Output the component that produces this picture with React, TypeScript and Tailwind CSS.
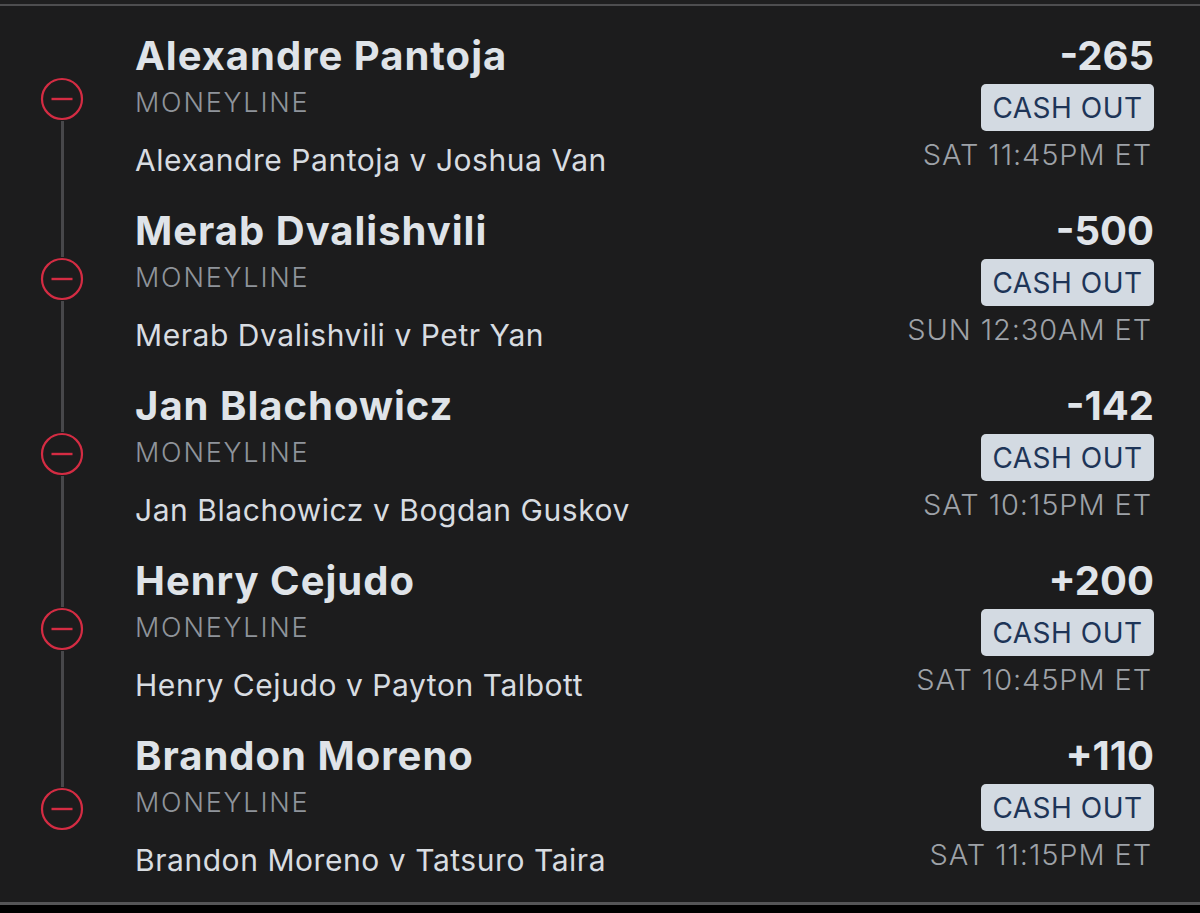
const bets = [
  { name: "Alexandre Pantoja", match: "Alexandre Pantoja v Joshua Van", odds: "-265", time: "SAT 11:45PM ET", top: "h-[41px]" },
  { name: "Merab Dvalishvili", match: "Merab Dvalishvili v Petr Yan", odds: "-500", time: "SUN 12:30AM ET", top: "h-[46px]" },
  { name: "Jan Blachowicz", match: "Jan Blachowicz v Bogdan Guskov", odds: "-142", time: "SAT 10:15PM ET", top: "h-[46px]" },
  { name: "Henry Cejudo", match: "Henry Cejudo v Payton Talbott", odds: "+200", time: "SAT 10:45PM ET", top: "h-[46px]" },
  { name: "Brandon Moreno", match: "Brandon Moreno v Tatsuro Taira", odds: "+110", time: "SAT 11:15PM ET", top: "h-[51px]" },
];

function MinusCircle() {
  return (
    <svg width="44" height="44" viewBox="0 0 44 44" className="block">
      <circle cx="22" cy="22" r="20" fill="none" stroke="#d42c43" strokeWidth="2.2" />
      <line x1="11.5" y1="22" x2="32.5" y2="22" stroke="#d42c43" strokeWidth="2.4" />
    </svg>
  );
}

export default function App() {
  return (
    <div
      className="w-[1200px] h-[913px] flex flex-col bg-black overflow-hidden"
      style={{ fontFamily: "Inter, 'Open Sans', sans-serif" }}
    >
      {/* top edge */}
      <div className="h-[4px] bg-[#1f1f20]" />
      <div className="h-[2px] bg-[#4e4e50]" />

      {/* bet list */}
      <div className="h-[896px] bg-[#1c1c1d] pt-[30px] overflow-hidden">
        {bets.map((b, i) => (
          <div key={b.name} className="h-[175px] flex">
            {/* timeline */}
            <div className="w-[124px] flex flex-col items-center">
              <div className={`w-[3px] ${b.top} ${i === 0 ? "bg-transparent" : "bg-[#47474a]"}`} />
              <MinusCircle />
              <div className={`w-[3px] flex-1 ${i === bets.length - 1 ? "bg-transparent" : "bg-[#47474a]"}`} />
            </div>

            {/* details */}
            <div className="flex-1 flex justify-between pl-[11px] pr-[46px]">
              <div>
                <div className="text-[40px] leading-[40px] font-bold tracking-[1px] text-[#dfe3e8]">{b.name}</div>
                <div className="text-[27px] leading-[54px] tracking-[1.8px] font-light text-[#8f949b]">MONEYLINE</div>
                <div className="mt-[15px] text-[30px] leading-[30px] tracking-[0.55px] text-[#d8dce1]">{b.match}</div>
              </div>
              <div className="flex flex-col items-end">
                <div className="text-[40px] leading-[40px] font-bold text-[#e0e4e9]">{b.odds}</div>
                <div className="mt-[8px] h-[47px] w-[173px] rounded-[5px] bg-[#d3dae2] flex items-center justify-center text-[28px] tracking-[0.5px] text-[#1e3558]">
                  CASH OUT
                </div>
                <div className="mt-[9px] mr-[2px] text-[29px] leading-[30px] tracking-[0.9px] font-light text-[#9ea2a8]">{b.time}</div>
              </div>
            </div>
          </div>
        ))}
      </div>

      {/* bottom edge */}
      <div className="h-[3px] bg-[#555557]" />
      <div className="flex-1 bg-black" />
    </div>
  );
}
